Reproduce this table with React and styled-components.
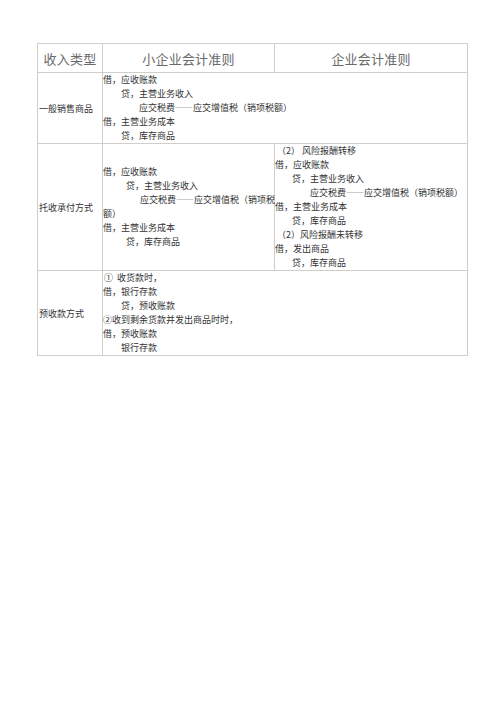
import styled, { createGlobalStyle } from "styled-components";

const Global = createGlobalStyle`
  html, body {
    margin: 0;
    padding: 0;
    background: #fff;
  }
  body {
    font-family: "Noto Sans CJK SC", "Noto Sans", sans-serif;
  }
`;

const Page = styled.div`
  padding: 43px 0 0 37px;
`;

const Table = styled.table`
  width: 431px;
  table-layout: fixed;
  border-collapse: collapse;
  border: 1px solid #cfcfc8;
`;

const HeadCell = styled.th`
  height: 28px;
  padding: 0;
  border: 1px solid #cfcfc8;
  font-weight: normal;
  font-size: 13px;
  color: #6a6a6a;
  text-align: center;
  vertical-align: middle;
  letter-spacing: 0.2px;
`;

const LabelCell = styled.td`
  padding: 0 0 0 1px;
  border: 1px solid #cfcfc8;
  font-size: 9px;
  color: #333;
  vertical-align: middle;
  white-space: nowrap;
`;

const EntryCell = styled.td`
  padding: 0;
  border: 1px solid #cfcfc8;
  font-size: 9px;
  color: #333;
  vertical-align: ${(p) => p.$align || "middle"};
`;

const Line = styled.div`
  height: 14px;
  line-height: 14px;
  padding-left: ${(p) => p.$indent || 0}px;
  white-space: pre;
`;

const Dash = styled.span`
  font-variant-east-asian: full-width;
  letter-spacing: 0;
`;

const Entries = ({ lines }) =>
  lines.map(([indent, text], i) => {
    const parts = text.split("——");
    return (
      <Line key={i} $indent={indent}>
        {parts.length > 1 ? (
          <>
            {parts[0]}
            <Dash>——</Dash>
            {parts[1]}
          </>
        ) : (
          text
        )}
      </Line>
    );
  });

const general = [
  [0, "借，应收账款"],
  [18, "贷，主营业务收入"],
  [36, "应交税费——应交增值税（销项税额）"],
  [0, "借，主营业务成本"],
  [18, "贷，库存商品"],
];

const consignSmall = [
  [0, "借，应收账款"],
  [23, "贷，主营业务收入"],
  [37, "应交税费——应交增值税（销项税"],
  [0, "额）"],
  [0, "借，主营业务成本"],
  [23, "贷，库存商品"],
];

const consignCorp = [
  [2, "（2） 风险报酬转移"],
  [0, "借，应收账款"],
  [17, "贷，主营业务收入"],
  [35, "应交税费——应交增值税（销项税额）"],
  [0, "借，主营业务成本"],
  [17, "贷，库存商品"],
  [2, "（2）风险报酬未转移"],
  [0, "借，发出商品"],
  [17, "贷，库存商品"],
];

const advance = [
  [1, "①  收货款时，"],
  [0, "借，银行存款"],
  [18, "贷，预收账款"],
  [0, "②收到剩余货款并发出商品时时，"],
  [0, "借，预收账款"],
  [18, "银行存款"],
];

export default function App() {
  return (
    <Page>
      <Global />
      <Table>
        <colgroup>
          <col style={{ width: 65 }} />
          <col style={{ width: 172 }} />
          <col style={{ width: 193 }} />
        </colgroup>
        <thead>
          <tr>
            <HeadCell>收入类型</HeadCell>
            <HeadCell>小企业会计准则</HeadCell>
            <HeadCell>企业会计准则</HeadCell>
          </tr>
        </thead>
        <tbody>
          <tr>
            <LabelCell>一般销售商品</LabelCell>
            <EntryCell colSpan={2}>
              <Entries lines={general} />
            </EntryCell>
          </tr>
          <tr>
            <LabelCell>托收承付方式</LabelCell>
            <EntryCell>
              <Entries lines={consignSmall} />
            </EntryCell>
            <EntryCell $align="top">
              <Entries lines={consignCorp} />
            </EntryCell>
          </tr>
          <tr>
            <LabelCell>预收款方式</LabelCell>
            <EntryCell colSpan={2}>
              <Entries lines={advance} />
            </EntryCell>
          </tr>
        </tbody>
      </Table>
    </Page>
  );
}
